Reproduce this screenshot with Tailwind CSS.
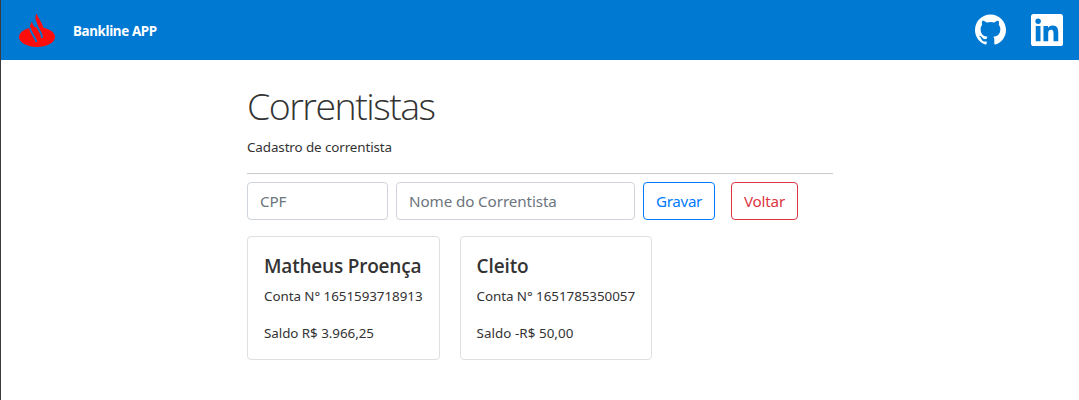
<!DOCTYPE html>
<html lang="pt-BR">
<head>
<meta charset="utf-8">
<title>Bankline APP</title>
<script src="https://cdn.jsdelivr.net/npm/@tailwindcss/browser@4"></script>
</head>
<body class="h-[400px] overflow-hidden border-l border-[#3b3b40] bg-white font-['Noto_Sans','Open_Sans',sans-serif] text-[13.4px] text-[#333]">
<header class="flex h-[60px] items-center bg-[#0079d3] pl-[18px] pr-4 text-white">
  <svg class="h-[34px] w-[36px]" viewBox="0 0 36 34" fill="#fe0d0a"><ellipse cx="18" cy="24" rx="18" ry="10"/><path d="M11.500 16l12-3v9l-11 2z"/><path d="M17.800.4c.4 2 1 3.200 2.200 5.200l3 5.200c1.200 2.200 1.500 4.200 1 7.200l-3 1L17.500 9C16 6 16 3 17.800.4z"/><path d="M13 8.500c.3 2 1 3.300 2.200 5.200l4 7-6 2-2-4.500C10.500 14 11.200 11 13 8.500z"/><path d="M11 14.500c.2 2 .8 3.800 1.600 5.100l3.400 5.800c.9 1.500 1.200 2.400 1.400 3.600M16.500 9c.2 2 .9 3.600 1.800 5.100l3.400 5.800c.8 1.400 1.200 2.700 1.200 5" fill="none" stroke="#0079d3" stroke-width="2"/></svg>
  <span class="ml-[18px] pt-0.5 text-[13.4px] leading-5 font-bold tracking-[-0.35px]">Bankline APP</span>
  <div class="ml-auto flex items-start gap-[25px]">
    <svg class="h-[31px] w-[31px]" viewBox="0 0 24 24" fill="currentColor"><path d="M12 .297c-6.630 0-12 5.373-12 12 0 5.303 3.438 9.800 8.205 11.385.6.113.82-.258.82-.577 0-.285-.01-1.040-.015-2.040-3.338.724-4.042-1.610-4.042-1.610C4.422 18.070 3.633 17.700 3.633 17.700c-1.087-.744.084-.729.084-.729 1.205.084 1.838 1.236 1.838 1.236 1.070 1.835 2.809 1.305 3.495.998.108-.776.417-1.305.76-1.605-2.665-.3-5.466-1.332-5.466-5.930 0-1.310.465-2.380 1.235-3.220-.135-.303-.54-1.523.105-3.176 0 0 1.005-.322 3.300 1.230.96-.267 1.980-.399 3-.405 1.020.006 2.040.138 3 .405 2.280-1.552 3.285-1.230 3.285-1.230.645 1.653.24 2.873.12 3.176.765.84 1.230 1.910 1.230 3.220 0 4.610-2.805 5.625-5.475 5.920.42.36.81 1.096.81 2.220 0 1.606-.015 2.896-.015 3.286 0 .315.21.69.825.57C20.565 22.092 24 17.592 24 12.297c0-6.627-5.373-12-12-12"/></svg>
    <svg class="h-8 w-8" viewBox="0 0 24 24" fill="currentColor"><path d="M20.447 20.452h-3.554v-5.569c0-1.328-.027-3.037-1.852-3.037-1.853 0-2.136 1.445-2.136 2.939v5.667H9.351V9h3.414v1.561h.046c.477-.9 1.637-1.850 3.370-1.850 3.601 0 4.267 2.370 4.267 5.455v6.286zM5.337 7.433a2.062 2.062 0 1 1 0-4.125 2.062 2.062 0 0 1 0 4.125zM7.119 20.452H3.555V9h3.564v11.452zM22.225 0H1.771C.792 0 0 .774 0 1.729v20.542C0 23.227.792 24 1.771 24h20.451C23.200 24 24 23.227 24 22.271V1.729C24 .774 23.200 0 22.222 0h.003z"/></svg>
  </div>
</header>
<main class="ml-[246px] w-[586px] pt-[23px]">
  <h1 class="h-[46px] font-['Open_Sans',sans-serif] text-[37.5px] leading-[46px] font-light tracking-[-1.5px]">Correntistas</h1>
  <p class="mt-2 h-5 leading-5 tracking-[-0.1px]">Cadastro de correntista</p>
  <hr class="mt-4 border-[#c9c9c9]">
  <form class="mt-2 flex text-[15.2px]">
    <input aria-label="CPF" placeholder="CPF" class="h-[38px] w-[141px] rounded border border-[#ced4da] px-3 tracking-[-0.1px] placeholder:text-[#6c757d]">
    <input aria-label="Nome do Correntista" placeholder="Nome do Correntista" class="ml-2 h-[38px] w-[239px] rounded border border-[#ced4da] px-3 tracking-[-0.1px] placeholder:text-[#6c757d]">
    <button type="button" class="ml-2 h-[38px] w-[72px] rounded border border-[#007bff] tracking-[-0.35px] text-[#007bff]">Gravar</button>
    <button type="button" class="ml-4 h-[38px] w-[67px] rounded border border-[#dc3545] tracking-[-0.2px] text-[#dc3545]">Voltar</button>
  </form>
  <section class="mt-4 flex gap-5">
    <article class="h-[124px] w-[193px] rounded border border-[#dfdfdf] px-4 pt-[17px] whitespace-nowrap">
      <h2 class="h-6 font-['Open_Sans',sans-serif] text-[19px] leading-6 font-semibold tracking-[-0.2px]">Matheus Proença</h2>
      <p class="mt-2 leading-5 tracking-[-0.05px]">Conta N° 1651593718913</p>
      <p class="mt-[17px] leading-5 tracking-[-0.05px]">Saldo R$ 3.966,25</p>
    </article>
    <article class="h-[124px] w-[192px] rounded border border-[#dfdfdf] px-[15.5px] pt-[17px] whitespace-nowrap">
      <h2 class="h-6 font-['Open_Sans',sans-serif] text-[19px] leading-6 font-semibold tracking-[-0.1px]">Cleito</h2>
      <p class="mt-2 leading-5 tracking-[-0.05px]">Conta N° 1651785350057</p>
      <p class="mt-[17px] leading-5 tracking-[0.05px]">Saldo -R$ 50,00</p>
    </article>
  </section>
</main>
</body>
</html>
